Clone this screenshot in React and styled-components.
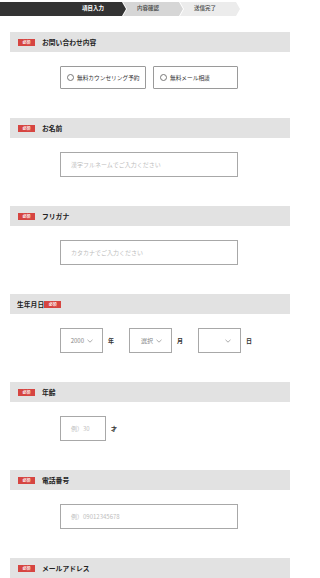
import React from "react";
import styled, { createGlobalStyle } from "styled-components";

const Global = createGlobalStyle`
  html, body { margin: 0; padding: 0; background: #fff; }
  body { font-family: "Noto Sans CJK JP", "Noto Sans", sans-serif; color: #222; }
  * { box-sizing: border-box; }
`;

const Page = styled.div`
  width: 300px;
  padding-top: 2px;
`;

const StepBar = styled.div`
  display: flex;
  height: 14px;
`;

const Step = styled.div`
  height: 14px;
  display: flex;
  align-items: center;
  font-size: 5.5px;
  line-height: 1;
  width: ${(p) => p.$w}px;
  margin-left: ${(p) => (p.$first ? 0 : -3)}px;
  justify-content: ${(p) => (p.$first ? "flex-end" : "flex-start")};
  padding: ${(p) => (p.$first ? "0 22px 0 0" : "0 0 0 14px")};
  background: ${(p) => p.$bg};
  color: ${(p) => p.$color};
  font-weight: ${(p) => (p.$first ? 700 : 500)};
  clip-path: ${(p) =>
    p.$first
      ? "polygon(0 0, calc(100% - 4px) 0, 100% 50%, calc(100% - 4px) 100%, 0 100%)"
      : "polygon(0 0, calc(100% - 4px) 0, 100% 50%, calc(100% - 4px) 100%, 0 100%, 4px 50%)"};
`;

const Form = styled.div`
  margin-top: 16px;
`;

const Section = styled.section`
  display: flex;
  flex-direction: column;
`;

const Header = styled.div`
  margin: 0 10px;
  height: 20px;
  background: #e2e2e2;
  display: flex;
  align-items: center;
  padding-left: ${(p) => (p.$badgeAfter ? 7 : 8)}px;
  gap: ${(p) => (p.$badgeAfter ? 0 : 7)}px;
`;

const Badge = styled.span`
  display: inline-flex;
  align-items: center;
  justify-content: center;
  width: 17px;
  height: 7px;
  background: #d64541;
  color: #fff;
  font-size: 4px;
  font-weight: 700;
  line-height: 1;
`;

const Label = styled.span`
  font-size: 6.8px;
  font-weight: 700;
  color: #222;
  line-height: 1;
`;

const Field = styled.div`
  margin: 14px 0 29px 60px;
  display: flex;
  align-items: center;
`;

const RadioBox = styled.label`
  width: ${(p) => p.$w}px;
  height: 23px;
  border: 1px solid #9a9a9a;
  border-radius: 1px;
  display: flex;
  align-items: center;
  padding-left: 6px;
  gap: 3px;
  margin-right: 7px;
  font-size: 5.7px;
  color: #333;
  line-height: 1;
`;

const RadioCircle = styled.span`
  width: 7px;
  height: 7px;
  border: 0.7px solid #777;
  border-radius: 50%;
  flex: none;
`;

const TextBox = styled.div`
  width: ${(p) => p.$w}px;
  height: 25px;
  border: 1px solid #a8a8a8;
  display: flex;
  align-items: center;
  padding-left: ${(p) => p.$pl || 10}px;
  font-size: 6px;
  color: #bdbdbd;
  line-height: 1;
`;

const SelectBox = styled.div`
  width: 43px;
  height: 25px;
  border: 1px solid #a8a8a8;
  display: flex;
  align-items: center;
  justify-content: flex-end;
  padding-right: 9px;
  gap: 3px;
  font-size: 6px;
  color: #888;
  line-height: 1;
`;

const Unit = styled.span`
  font-size: 6px;
  font-weight: 700;
  color: #333;
  margin: 0 ${(p) => p.$mr ?? 15}px 0 5px;
`;

const Chevron = () => (
  <svg width="6" height="4" viewBox="0 0 6 4">
    <path d="M0.5 0.8 L3 3.2 L5.5 0.8" fill="none" stroke="#888" strokeWidth="0.7" />
  </svg>
);

const SectionHeader = ({ label, badgeAfter }) => (
  <Header $badgeAfter={badgeAfter}>
    {badgeAfter ? (
      <>
        <Label>{label}</Label>
        <Badge>必須</Badge>
      </>
    ) : (
      <>
        <Badge>必須</Badge>
        <Label>{label}</Label>
      </>
    )}
  </Header>
);

export default function App() {
  return (
    <>
      <Global />
      <Page>
        <StepBar>
          <Step $first $w={126} $bg="#333" $color="#fff">項目入力</Step>
          <Step $w={60} $bg="#d6d6d6" $color="#444">内容確認</Step>
          <Step $w={60} $bg="#ececec" $color="#444">送信完了</Step>
        </StepBar>
        <Form>
          <Section>
            <SectionHeader label="お問い合わせ内容" />
            <Field>
              <RadioBox $w={86}>
                <RadioCircle />
                無料カウンセリング予約
              </RadioBox>
              <RadioBox $w={85}>
                <RadioCircle />
                無料メール相談
              </RadioBox>
            </Field>
          </Section>
          <Section>
            <SectionHeader label="お名前" />
            <Field>
              <TextBox $w={178}>漢字フルネームでご入力ください</TextBox>
            </Field>
          </Section>
          <Section>
            <SectionHeader label="フリガナ" />
            <Field>
              <TextBox $w={178}>カタカナでご入力ください</TextBox>
            </Field>
          </Section>
          <Section>
            <SectionHeader label="生年月日" badgeAfter />
            <Field>
              <SelectBox>
                2000 <Chevron />
              </SelectBox>
              <Unit>年</Unit>
              <SelectBox>
                選択 <Chevron />
              </SelectBox>
              <Unit>月</Unit>
              <SelectBox>
                <Chevron />
              </SelectBox>
              <Unit $mr={0}>日</Unit>
            </Field>
          </Section>
          <Section>
            <SectionHeader label="年齢" />
            <Field>
              <TextBox $w={46}>例）30</TextBox>
              <Unit $mr={0}>才</Unit>
            </Field>
          </Section>
          <Section>
            <SectionHeader label="電話番号" />
            <Field>
              <TextBox $w={178}>例）09012345678</TextBox>
            </Field>
          </Section>
          <Section>
            <SectionHeader label="メールアドレス" />
          </Section>
        </Form>
      </Page>
    </>
  );
}
